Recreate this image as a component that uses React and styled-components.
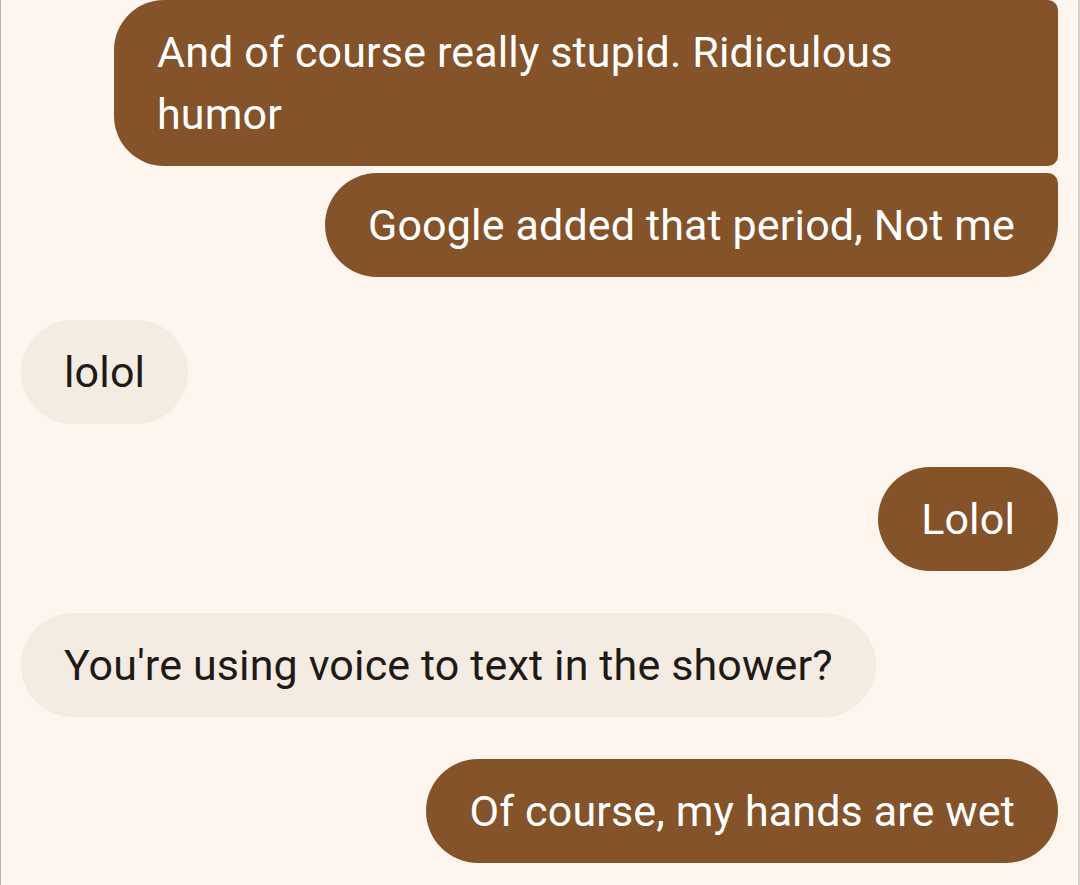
import React from 'react';
import styled, { createGlobalStyle } from 'styled-components';

const GlobalStyle = createGlobalStyle`
  html, body {
    margin: 0;
    padding: 0;
    background: #fdf5ee;
  }
  body {
    font-family: Roboto, "Noto Sans", "Liberation Sans", sans-serif;
  }
`;

const messages = [
  { id: 1, mine: true, text: 'And of course really stupid. Ridiculous humor', shape: 'first', wrap: true },
  { id: 2, mine: true, text: 'Google added that period, Not me', shape: 'last', gap: 7 },
  { id: 3, mine: false, text: 'lolol', gap: 43 },
  { id: 4, mine: true, text: 'Lolol', gap: 43 },
  { id: 5, mine: false, text: "You're using voice to text in the shower?", gap: 42 },
  { id: 6, mine: true, text: 'Of course, my hands are wet', gap: 42 },
];

const radiusFor = (mine, shape) => {
  if (!mine) return '52px';
  if (shape === 'first') return '50px 10px 10px 50px';
  if (shape === 'last') return '52px 10px 52px 52px';
  return '52px';
};

const App = () => {
  return (
    <>
      <GlobalStyle />
      <Screen>
        <Thread>
          {messages.map((m) => (
            <Row key={m.id} $mine={m.mine} $gap={m.gap || 0}>
              <Bubble
                $mine={m.mine}
                $radius={radiusFor(m.mine, m.shape)}
                $wide={m.wrap}
              >
                {m.text}
              </Bubble>
            </Row>
          ))}
        </Thread>
      </Screen>
    </>
  );
};

const Screen = styled.div`
  width: 1080px;
  height: 885px;
  box-sizing: border-box;
  background: #fdf5ee;
  border-left: 1px solid #bcb3ad;
  border-right: 2px solid #d9d0ca;
  overflow: hidden;
`;

const Thread = styled.div`
  display: flex;
  flex-direction: column;
  padding: 0 20px 0 20px;
`;

const Row = styled.div`
  display: flex;
  justify-content: ${(p) => (p.$mine ? 'flex-end' : 'flex-start')};
  margin-top: ${(p) => p.$gap}px;
`;

const Bubble = styled.div`
  box-sizing: border-box;
  max-width: 944px;
  width: ${(p) => (p.$wide ? '944px' : 'auto')};
  padding: 21px 43px 21px 43px;
  border-radius: ${(p) => p.$radius};
  background: ${(p) => (p.$mine ? '#85532a' : '#f4ebe3')};
  color: ${(p) => (p.$mine ? '#ffffff' : '#1f1a16')};
  font-size: 43px;
  line-height: 62px;
  letter-spacing: 0.15px;
  white-space: normal;
`;

export default App;
